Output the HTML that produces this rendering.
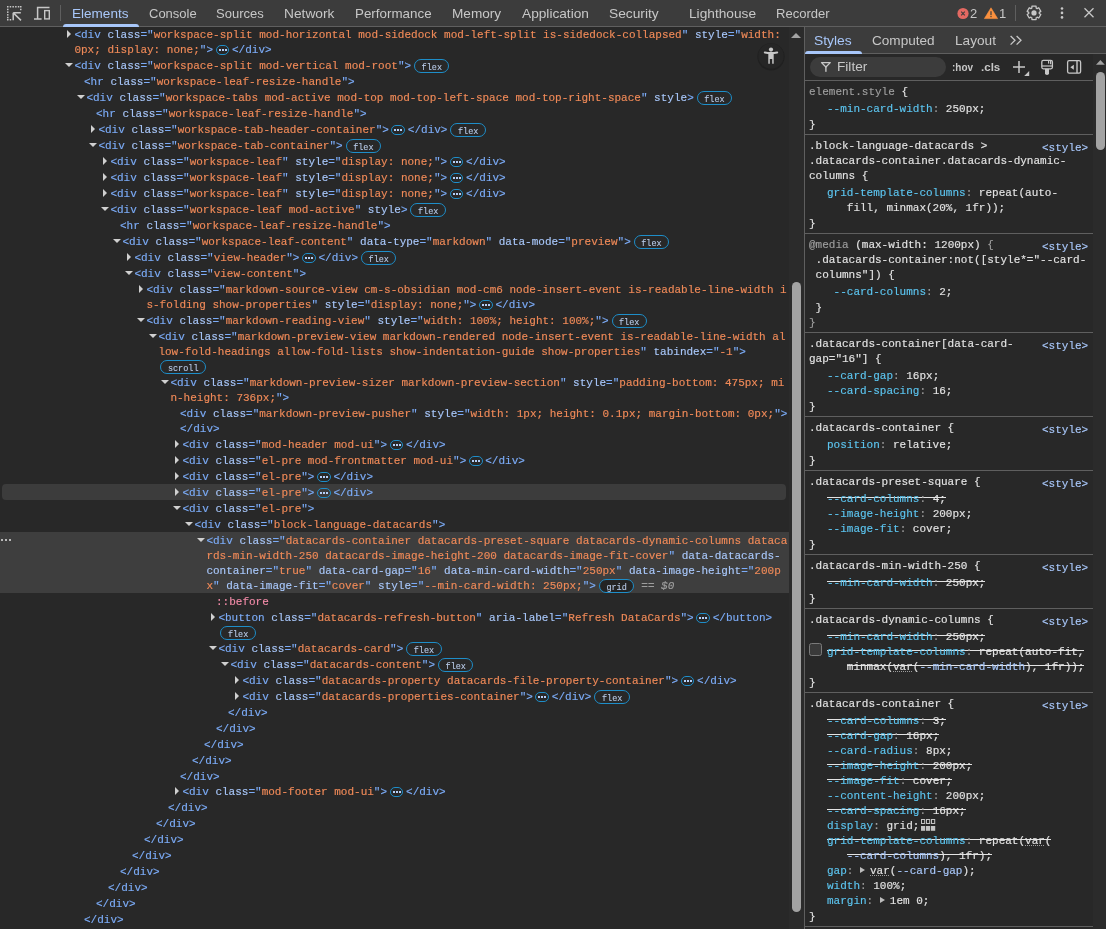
<!DOCTYPE html><html><head><meta charset="utf-8"><style>
*{box-sizing:border-box}
html,body{margin:0;padding:0;width:1106px;height:929px;overflow:hidden;background:#282828}
body{position:relative;font-family:'Liberation Sans', sans-serif}
.wrap{position:absolute;left:0;top:0;width:1106px;height:929px;will-change:transform}
.tb{position:absolute;left:0;top:0;width:1106px;height:26px;background:#3c3c3c}
.tbb{position:absolute;left:0;top:26px;width:1106px;height:1px;background:#5f5f5f}
.tab{position:absolute;top:6px;font:13px 'Liberation Sans', sans-serif;color:#c7c7c7;white-space:pre;line-height:15px}
.tab.on{color:#a8c7fa}
.ul{position:absolute;background:#a8c7fa;border-radius:3px 3px 0 0}
.ln{position:absolute;font:11px 'Liberation Mono', monospace;line-height:15px;height:15px;white-space:pre;-webkit-text-stroke:0.15px currentColor}
.t{color:#7cacf8} .a{color:#a8c7fa} .v{color:#f08a58} .p{color:#f28ba8}
.ell{display:inline-block;position:relative;top:2.6px;vertical-align:top;width:13.8px;height:10px;margin:0 2.6px 0 2.6px;border:1px solid #1e8ec9;border-radius:5px;text-align:center;line-height:6px}
.ell i{display:inline-block;width:2px;height:2px;background:#b4cff8;margin:0 .5px;vertical-align:top;margin-top:3px}
.bdg{display:inline-block;position:relative;top:.3px;vertical-align:top;height:14px;padding:0 6.5px;margin-left:3px;border:1px solid #1e8ec9;border-radius:7px;font:8.5px 'Liberation Mono', monospace;line-height:16px;color:#b9cbe8;-webkit-text-stroke:0.1px currentColor}
.bdg.g{background:#242424}
.dl{color:#9e9e9e;font-style:italic;margin-left:7px}
.trid{position:absolute;width:0;height:0;border-left:4px solid transparent;border-right:4px solid transparent;border-top:4.2px solid #d0d0d0}
.trir{position:absolute;width:0;height:0;border-top:4px solid transparent;border-bottom:4px solid transparent;border-left:4.6px solid #d0d0d0}
.hov{position:absolute;left:2px;width:784px;background:#3c3c3c;border-radius:4px}
.selr{position:absolute;left:0;width:789px;background:#3e3e3e}
.seldots{position:absolute;left:1px;height:3px;line-height:0}
.seldots i{display:inline-block;width:2px;height:2px;border-radius:1px;background:#e3e3e3;margin-right:1.75px}
.lsb{position:absolute;left:789px;top:27px;width:15px;height:902px;background:#2b2b2b}
.lth{position:absolute;left:792px;top:282px;width:9px;height:630px;border-radius:4.5px;background:#a3a3a3}
.vdiv{position:absolute;left:804px;top:27px;width:1px;height:902px;background:#5f5f5f}
.sh{position:absolute;left:805px;top:27px;width:301px;height:26px;background:#3c3c3c}
.shb{position:absolute;left:805px;top:53px;width:301px;height:1px;background:#5f5f5f}
.ftb{position:absolute;left:805px;top:80px;width:288px;height:1px;background:#5f5f5f}
.rsb{position:absolute;left:1093px;top:54px;width:13px;height:875px;background:#2b2b2b}
.rth{position:absolute;left:1096px;top:72px;width:9px;height:78px;border-radius:4.5px;background:#a3a3a3}
.pill{position:absolute;left:810px;top:57px;width:136px;height:20px;border-radius:10px;background:#3c3c3c}
.sb{position:absolute;left:805px;width:288px;height:1px;background:#5f5f5f}
.eg{color:#9e9e9e} .sw{color:#e3e3e3} .pn{color:#5cc5f0} .pc{color:#9e9e9e} .pv{color:#e3e3e3} .lk{color:#a8c7fa} .vr{color:#a8c7fa}
.st{background:linear-gradient(#e3e3e3,#e3e3e3) 0 4.2px/100% 1px no-repeat}
.vu{text-decoration:underline dotted #9e9e9e}
.cbx{position:absolute;left:809px;width:13px;height:13px;border:1px solid #7a7a7a;border-radius:2.5px;background:#3a3a3a}
.exp{display:inline-block;width:10px;height:15px;position:relative;vertical-align:top}
.exp:after{content:"";position:absolute;left:0px;top:3.5px;border-top:3.7px solid transparent;border-bottom:3.7px solid transparent;border-left:5.6px solid #bdbdbd}
.hc{position:absolute;font:bold 10.5px 'Liberation Sans', sans-serif;color:#c7c7c7;line-height:15px;white-space:pre}
.gicon{display:inline-block;width:14px;height:15px;position:relative;vertical-align:top}
</style></head><body>
<div class="wrap">
<div class="tb"></div><div class="tbb"></div>
<div class="tab on" style="left:72.16px;top:6px;transform:scaleX(1.0415);transform-origin:0 0">Elements</div>
<div class="tab" style="left:149.0px;top:6px;transform:scaleX(1.0);transform-origin:0 0">Console</div>
<div class="tab" style="left:216.0px;top:6px;transform:scaleX(1.0);transform-origin:0 0">Sources</div>
<div class="tab" style="left:283.94px;top:6px;transform:scaleX(1.0574);transform-origin:0 0">Network</div>
<div class="tab" style="left:355.47px;top:6px;transform:scaleX(1.0288);transform-origin:0 0">Performance</div>
<div class="tab" style="left:452.15px;top:6px;transform:scaleX(1.0457);transform-origin:0 0">Memory</div>
<div class="tab" style="left:522.3px;top:6px;transform:scaleX(1.0524);transform-origin:0 0">Application</div>
<div class="tab" style="left:608.94px;top:6px;transform:scaleX(1.0587);transform-origin:0 0">Security</div>
<div class="tab" style="left:689.35px;top:6px;transform:scaleX(1.0532);transform-origin:0 0">Lighthouse</div>
<div class="tab" style="left:776.2px;top:6px;transform:scaleX(1.0038);transform-origin:0 0">Recorder</div>
<div class="ul" style="left:63px;top:24px;width:76px;height:3px"></div>
<div class="lsb"></div><div class="lth"></div>
<div class="trir" style="left:66.6px;top:30.2px"></div>
<div class="ln" style="left:74.4px;top:27.6px"><span class="t">&lt;div </span><span class="a">class</span><span class="t">="</span><span class="v">workspace-split mod-horizontal mod-sidedock mod-left-split is-sidedock-collapsed</span><span class="t">" </span><span class="a">style</span><span class="t">="</span><span class="v">width:</span></div>
<div class="ln" style="left:74.4px;top:42.6px"><span class="v">0px; display: none;</span><span class="t">"&gt;</span><span class="ell"><i></i><i></i><i></i></span><span class="t">&lt;/div&gt;</span></div>
<div class="trid" style="left:65px;top:62.9px"></div>
<div class="ln" style="left:74.4px;top:58.6px"><span class="t">&lt;div </span><span class="a">class</span><span class="t">="</span><span class="v">workspace-split mod-vertical mod-root</span><span class="t">"&gt;</span><span class="bdg">flex</span></div>
<div class="ln" style="left:84.0px;top:74.6px"><span class="t">&lt;hr </span><span class="a">class</span><span class="t">="</span><span class="v">workspace-leaf-resize-handle</span><span class="t">"&gt;</span></div>
<div class="trid" style="left:77px;top:94.9px"></div>
<div class="ln" style="left:86.4px;top:90.6px"><span class="t">&lt;div </span><span class="a">class</span><span class="t">="</span><span class="v">workspace-tabs mod-active mod-top mod-top-left-space mod-top-right-space</span><span class="t">" </span><span class="a">style</span><span class="t">&gt;</span><span class="bdg">flex</span></div>
<div class="ln" style="left:96.0px;top:106.6px"><span class="t">&lt;hr </span><span class="a">class</span><span class="t">="</span><span class="v">workspace-leaf-resize-handle</span><span class="t">"&gt;</span></div>
<div class="trir" style="left:90.6px;top:125.2px"></div>
<div class="ln" style="left:98.4px;top:122.6px"><span class="t">&lt;div </span><span class="a">class</span><span class="t">="</span><span class="v">workspace-tab-header-container</span><span class="t">"&gt;</span><span class="ell"><i></i><i></i><i></i></span><span class="t">&lt;/div&gt;</span><span class="bdg">flex</span></div>
<div class="trid" style="left:89px;top:142.9px"></div>
<div class="ln" style="left:98.4px;top:138.6px"><span class="t">&lt;div </span><span class="a">class</span><span class="t">="</span><span class="v">workspace-tab-container</span><span class="t">"&gt;</span><span class="bdg">flex</span></div>
<div class="trir" style="left:102.6px;top:157.2px"></div>
<div class="ln" style="left:110.4px;top:154.6px"><span class="t">&lt;div </span><span class="a">class</span><span class="t">="</span><span class="v">workspace-leaf</span><span class="t">" </span><span class="a">style</span><span class="t">="</span><span class="v">display: none;</span><span class="t">"&gt;</span><span class="ell"><i></i><i></i><i></i></span><span class="t">&lt;/div&gt;</span></div>
<div class="trir" style="left:102.6px;top:173.2px"></div>
<div class="ln" style="left:110.4px;top:170.6px"><span class="t">&lt;div </span><span class="a">class</span><span class="t">="</span><span class="v">workspace-leaf</span><span class="t">" </span><span class="a">style</span><span class="t">="</span><span class="v">display: none;</span><span class="t">"&gt;</span><span class="ell"><i></i><i></i><i></i></span><span class="t">&lt;/div&gt;</span></div>
<div class="trir" style="left:102.6px;top:189.2px"></div>
<div class="ln" style="left:110.4px;top:186.6px"><span class="t">&lt;div </span><span class="a">class</span><span class="t">="</span><span class="v">workspace-leaf</span><span class="t">" </span><span class="a">style</span><span class="t">="</span><span class="v">display: none;</span><span class="t">"&gt;</span><span class="ell"><i></i><i></i><i></i></span><span class="t">&lt;/div&gt;</span></div>
<div class="trid" style="left:101px;top:206.9px"></div>
<div class="ln" style="left:110.4px;top:202.6px"><span class="t">&lt;div </span><span class="a">class</span><span class="t">="</span><span class="v">workspace-leaf mod-active</span><span class="t">" </span><span class="a">style</span><span class="t">&gt;</span><span class="bdg">flex</span></div>
<div class="ln" style="left:120.0px;top:218.6px"><span class="t">&lt;hr </span><span class="a">class</span><span class="t">="</span><span class="v">workspace-leaf-resize-handle</span><span class="t">"&gt;</span></div>
<div class="trid" style="left:113px;top:238.9px"></div>
<div class="ln" style="left:122.4px;top:234.6px"><span class="t">&lt;div </span><span class="a">class</span><span class="t">="</span><span class="v">workspace-leaf-content</span><span class="t">" </span><span class="a">data-type</span><span class="t">="</span><span class="v">markdown</span><span class="t">" </span><span class="a">data-mode</span><span class="t">="</span><span class="v">preview</span><span class="t">"&gt;</span><span class="bdg">flex</span></div>
<div class="trir" style="left:126.6px;top:253.2px"></div>
<div class="ln" style="left:134.4px;top:250.6px"><span class="t">&lt;div </span><span class="a">class</span><span class="t">="</span><span class="v">view-header</span><span class="t">"&gt;</span><span class="ell"><i></i><i></i><i></i></span><span class="t">&lt;/div&gt;</span><span class="bdg">flex</span></div>
<div class="trid" style="left:125px;top:270.9px"></div>
<div class="ln" style="left:134.4px;top:266.6px"><span class="t">&lt;div </span><span class="a">class</span><span class="t">="</span><span class="v">view-content</span><span class="t">"&gt;</span></div>
<div class="trir" style="left:138.6px;top:285.2px"></div>
<div class="ln" style="left:146.4px;top:282.6px"><span class="t">&lt;div </span><span class="a">class</span><span class="t">="</span><span class="v">markdown-source-view cm-s-obsidian mod-cm6 node-insert-event is-readable-line-width i</span></div>
<div class="ln" style="left:146.4px;top:297.6px"><span class="v">s-folding show-properties</span><span class="t">" </span><span class="a">style</span><span class="t">="</span><span class="v">display: none;</span><span class="t">"&gt;</span><span class="ell"><i></i><i></i><i></i></span><span class="t">&lt;/div&gt;</span></div>
<div class="trid" style="left:137px;top:317.9px"></div>
<div class="ln" style="left:146.4px;top:313.6px"><span class="t">&lt;div </span><span class="a">class</span><span class="t">="</span><span class="v">markdown-reading-view</span><span class="t">" </span><span class="a">style</span><span class="t">="</span><span class="v">width: 100%; height: 100%;</span><span class="t">"&gt;</span><span class="bdg">flex</span></div>
<div class="trid" style="left:149px;top:333.9px"></div>
<div class="ln" style="left:158.4px;top:329.6px"><span class="t">&lt;div </span><span class="a">class</span><span class="t">="</span><span class="v">markdown-preview-view markdown-rendered node-insert-event is-readable-line-width al</span></div>
<div class="ln" style="left:158.4px;top:344.6px"><span class="v">low-fold-headings allow-fold-lists show-indentation-guide show-properties</span><span class="t">" </span><span class="a">tabindex</span><span class="t">="</span><span class="v">-1</span><span class="t">"&gt;</span></div>
<div class="ln" style="left:158.4px;top:359.6px"><span class="bdg" style="margin-left:2px">scroll</span></div>
<div class="trid" style="left:161px;top:379.9px"></div>
<div class="ln" style="left:170.4px;top:375.6px"><span class="t">&lt;div </span><span class="a">class</span><span class="t">="</span><span class="v">markdown-preview-sizer markdown-preview-section</span><span class="t">" </span><span class="a">style</span><span class="t">="</span><span class="v">padding-bottom: 475px; mi</span></div>
<div class="ln" style="left:170.4px;top:390.6px"><span class="v">n-height: 736px;</span><span class="t">"&gt;</span></div>
<div class="ln" style="left:180.0px;top:406.6px"><span class="t">&lt;div </span><span class="a">class</span><span class="t">="</span><span class="v">markdown-preview-pusher</span><span class="t">" </span><span class="a">style</span><span class="t">="</span><span class="v">width: 1px; height: 0.1px; margin-bottom: 0px;</span><span class="t">"&gt;</span></div>
<div class="ln" style="left:180.0px;top:421.6px"><span class="t">&lt;/div&gt;</span></div>
<div class="trir" style="left:174.6px;top:440.2px"></div>
<div class="ln" style="left:182.4px;top:437.6px"><span class="t">&lt;div </span><span class="a">class</span><span class="t">="</span><span class="v">mod-header mod-ui</span><span class="t">"&gt;</span><span class="ell"><i></i><i></i><i></i></span><span class="t">&lt;/div&gt;</span></div>
<div class="trir" style="left:174.6px;top:456.2px"></div>
<div class="ln" style="left:182.4px;top:453.6px"><span class="t">&lt;div </span><span class="a">class</span><span class="t">="</span><span class="v">el-pre mod-frontmatter mod-ui</span><span class="t">"&gt;</span><span class="ell"><i></i><i></i><i></i></span><span class="t">&lt;/div&gt;</span></div>
<div class="trir" style="left:174.6px;top:472.2px"></div>
<div class="ln" style="left:182.4px;top:469.6px"><span class="t">&lt;div </span><span class="a">class</span><span class="t">="</span><span class="v">el-pre</span><span class="t">"&gt;</span><span class="ell"><i></i><i></i><i></i></span><span class="t">&lt;/div&gt;</span></div>
<div class="hov" style="top:484.0px;height:16px"></div>
<div class="trir" style="left:174.6px;top:488.2px"></div>
<div class="ln" style="left:182.4px;top:485.6px"><span class="t">&lt;div </span><span class="a">class</span><span class="t">="</span><span class="v">el-pre</span><span class="t">"&gt;</span><span class="ell"><i></i><i></i><i></i></span><span class="t">&lt;/div&gt;</span></div>
<div class="trid" style="left:173px;top:505.9px"></div>
<div class="ln" style="left:182.4px;top:501.6px"><span class="t">&lt;div </span><span class="a">class</span><span class="t">="</span><span class="v">el-pre</span><span class="t">"&gt;</span></div>
<div class="trid" style="left:185px;top:521.9px"></div>
<div class="ln" style="left:194.4px;top:517.6px"><span class="t">&lt;div </span><span class="a">class</span><span class="t">="</span><span class="v">block-language-datacards</span><span class="t">"&gt;</span></div>
<div class="selr" style="top:531.7px;height:61px"></div><div class="seldots" style="top:535.6px"><i></i><i></i><i></i></div>
<div class="trid" style="left:197px;top:537.9px"></div>
<div class="ln" style="left:206.4px;top:533.6px"><span class="t">&lt;div </span><span class="a">class</span><span class="t">="</span><span class="v">datacards-container datacards-preset-square datacards-dynamic-columns dataca</span></div>
<div class="ln" style="left:206.4px;top:548.6px"><span class="v">rds-min-width-250 datacards-image-height-200 datacards-image-fit-cover</span><span class="t">" </span><span class="a">data-datacards-</span></div>
<div class="ln" style="left:206.4px;top:563.6px"><span class="a">container</span><span class="t">="</span><span class="v">true</span><span class="t">" </span><span class="a">data-card-gap</span><span class="t">="</span><span class="v">16</span><span class="t">" </span><span class="a">data-min-card-width</span><span class="t">="</span><span class="v">250px</span><span class="t">" </span><span class="a">data-image-height</span><span class="t">="</span><span class="v">200p</span></div>
<div class="ln" style="left:206.4px;top:578.6px"><span class="v">x</span><span class="t">" </span><span class="a">data-image-fit</span><span class="t">="</span><span class="v">cover</span><span class="t">" </span><span class="a">style</span><span class="t">="</span><span class="v">--min-card-width: 250px;</span><span class="t">"&gt;</span><span class="bdg g">grid</span><span class="dl">== $0</span></div>
<div class="ln" style="left:216.0px;top:594.6px"><span class="p">::before</span></div>
<div class="trir" style="left:210.6px;top:613.2px"></div>
<div class="ln" style="left:218.4px;top:610.6px"><span class="t">&lt;button </span><span class="a">class</span><span class="t">="</span><span class="v">datacards-refresh-button</span><span class="t">" </span><span class="a">aria-label</span><span class="t">="</span><span class="v">Refresh DataCards</span><span class="t">"&gt;</span><span class="ell"><i></i><i></i><i></i></span><span class="t">&lt;/button&gt;</span></div>
<div class="ln" style="left:218.4px;top:625.6px"><span class="bdg" style="margin-left:2px">flex</span></div>
<div class="trid" style="left:209px;top:645.9px"></div>
<div class="ln" style="left:218.4px;top:641.6px"><span class="t">&lt;div </span><span class="a">class</span><span class="t">="</span><span class="v">datacards-card</span><span class="t">"&gt;</span><span class="bdg">flex</span></div>
<div class="trid" style="left:221px;top:661.9px"></div>
<div class="ln" style="left:230.4px;top:657.6px"><span class="t">&lt;div </span><span class="a">class</span><span class="t">="</span><span class="v">datacards-content</span><span class="t">"&gt;</span><span class="bdg">flex</span></div>
<div class="trir" style="left:234.6px;top:676.2px"></div>
<div class="ln" style="left:242.4px;top:673.6px"><span class="t">&lt;div </span><span class="a">class</span><span class="t">="</span><span class="v">datacards-property datacards-file-property-container</span><span class="t">"&gt;</span><span class="ell"><i></i><i></i><i></i></span><span class="t">&lt;/div&gt;</span></div>
<div class="trir" style="left:234.6px;top:692.2px"></div>
<div class="ln" style="left:242.4px;top:689.6px"><span class="t">&lt;div </span><span class="a">class</span><span class="t">="</span><span class="v">datacards-properties-container</span><span class="t">"&gt;</span><span class="ell"><i></i><i></i><i></i></span><span class="t">&lt;/div&gt;</span><span class="bdg">flex</span></div>
<div class="ln" style="left:228.0px;top:705.6px"><span class="t">&lt;/div&gt;</span></div>
<div class="ln" style="left:216.0px;top:721.6px"><span class="t">&lt;/div&gt;</span></div>
<div class="ln" style="left:204.0px;top:737.6px"><span class="t">&lt;/div&gt;</span></div>
<div class="ln" style="left:192.0px;top:753.6px"><span class="t">&lt;/div&gt;</span></div>
<div class="ln" style="left:180.0px;top:769.6px"><span class="t">&lt;/div&gt;</span></div>
<div class="trir" style="left:174.6px;top:787.2px"></div>
<div class="ln" style="left:182.4px;top:784.6px"><span class="t">&lt;div </span><span class="a">class</span><span class="t">="</span><span class="v">mod-footer mod-ui</span><span class="t">"&gt;</span><span class="ell"><i></i><i></i><i></i></span><span class="t">&lt;/div&gt;</span></div>
<div class="ln" style="left:168.0px;top:800.6px"><span class="t">&lt;/div&gt;</span></div>
<div class="ln" style="left:156.0px;top:816.6px"><span class="t">&lt;/div&gt;</span></div>
<div class="ln" style="left:144.0px;top:832.6px"><span class="t">&lt;/div&gt;</span></div>
<div class="ln" style="left:132.0px;top:848.6px"><span class="t">&lt;/div&gt;</span></div>
<div class="ln" style="left:120.0px;top:864.6px"><span class="t">&lt;/div&gt;</span></div>
<div class="ln" style="left:108.0px;top:880.6px"><span class="t">&lt;/div&gt;</span></div>
<div class="ln" style="left:96.0px;top:896.6px"><span class="t">&lt;/div&gt;</span></div>
<div class="ln" style="left:84.0px;top:912.6px"><span class="t">&lt;/div&gt;</span></div>
<div class="vdiv"></div>
<div class="sh"></div><div class="shb"></div>
<div class="tab on" style="left:814.14px;top:33px;transform:scaleX(1.0647);transform-origin:0 0">Styles</div>
<div class="tab" style="left:872.2px;top:33px;transform:scaleX(1.0441);transform-origin:0 0">Computed</div>
<div class="tab" style="left:954.75px;top:33px;transform:scaleX(1.05);transform-origin:0 0">Layout</div>
<div class="ul" style="left:805px;top:51px;width:57px;height:3px"></div>
<div class="pill"></div><div class="ftb"></div><div class="rsb"></div><div class="rth"></div>
<div class="tab" style="left:837.35px;top:59px;transform:scaleX(1.05);transform-origin:0 0">Filter</div>
<div class="tab cnt" style="left:970px;top:6px">2</div><div class="tab cnt" style="left:999px;top:6px">1</div>
<div class="hc" style="left:951.5px;top:60px;transform:scaleX(0.95);transform-origin:0 0">:hov</div><div class="hc" style="left:981px;top:60px;transform:scaleX(1.1);transform-origin:0 0">.cls</div>
<div class="ln" style="left:809.0px;top:84.5px"><span class="eg">element.style</span><span class="sw"> {</span></div>
<div class="ln" style="left:827.0px;top:101.5px"><span class="pn">--min-card-width</span><span class="pc">: </span><span class="pv">250px</span><span class="pv">;</span></div>
<div class="ln" style="left:809.0px;top:117.5px"><span class="sw">}</span></div>
<div class="sb" style="top:134px"></div>
<div class="ln" style="left:809.0px;top:138.5px"><span class="sw">.block-language-datacards &gt;</span></div>
<div class="ln" style="left:1042.0px;top:140.5px"><span class="lk">&lt;style&gt;</span></div>
<div class="ln" style="left:809.0px;top:153.5px"><span class="sw">.datacards-container.datacards-dynamic-</span></div>
<div class="ln" style="left:809.0px;top:168.5px"><span class="sw">columns {</span></div>
<div class="ln" style="left:827.0px;top:185.5px"><span class="pn">grid-template-columns</span><span class="pc">: </span><span class="pv">repeat(auto-</span></div>
<div class="ln" style="left:846.8px;top:200.5px"><span class="pv">fill, minmax(20%, 1fr));</span></div>
<div class="ln" style="left:809.0px;top:216.5px"><span class="sw">}</span></div>
<div class="sb" style="top:233px"></div>
<div class="ln" style="left:809.0px;top:237.5px"><span class="eg">@media</span><span class="sw"> (max-width: 1200px)</span><span class="eg"> {</span></div>
<div class="ln" style="left:1042.0px;top:239.5px"><span class="lk">&lt;style&gt;</span></div>
<div class="ln" style="left:809.0px;top:252.5px"><span class="sw"> .datacards-container:not([style*="--card-</span></div>
<div class="ln" style="left:809.0px;top:267.5px"><span class="sw"> columns"]) {</span></div>
<div class="ln" style="left:833.6px;top:284.5px"><span class="pn">--card-columns</span><span class="pc">: </span><span class="pv">2</span><span class="pv">;</span></div>
<div class="ln" style="left:809.0px;top:300.5px"><span class="sw"> }</span></div>
<div class="ln" style="left:809.0px;top:315.5px"><span class="eg">}</span></div>
<div class="sb" style="top:332px"></div>
<div class="ln" style="left:809.0px;top:336.5px"><span class="sw">.datacards-container[data-card-</span></div>
<div class="ln" style="left:1042.0px;top:338.5px"><span class="lk">&lt;style&gt;</span></div>
<div class="ln" style="left:809.0px;top:351.5px"><span class="sw">gap="16"] {</span></div>
<div class="ln" style="left:827.0px;top:368.5px"><span class="pn">--card-gap</span><span class="pc">: </span><span class="pv">16px</span><span class="pv">;</span></div>
<div class="ln" style="left:827.0px;top:383.5px"><span class="pn">--card-spacing</span><span class="pc">: </span><span class="pv">16</span><span class="pv">;</span></div>
<div class="ln" style="left:809.0px;top:399.5px"><span class="sw">}</span></div>
<div class="sb" style="top:416px"></div>
<div class="ln" style="left:809.0px;top:420.5px"><span class="sw">.datacards-container {</span></div>
<div class="ln" style="left:1042.0px;top:422.5px"><span class="lk">&lt;style&gt;</span></div>
<div class="ln" style="left:827.0px;top:437.5px"><span class="pn">position</span><span class="pc">: </span><span class="pv">relative</span><span class="pv">;</span></div>
<div class="ln" style="left:809.0px;top:453.5px"><span class="sw">}</span></div>
<div class="sb" style="top:470px"></div>
<div class="ln" style="left:809.0px;top:474.5px"><span class="sw">.datacards-preset-square {</span></div>
<div class="ln" style="left:1042.0px;top:476.5px"><span class="lk">&lt;style&gt;</span></div>
<div class="ln" style="left:827.0px;top:491.5px"><span class="st"><span class="pn">--card-columns</span><span class="pc">: </span><span class="pv">4</span><span class="pv">;</span></span></div>
<div class="ln" style="left:827.0px;top:506.5px"><span class="pn">--image-height</span><span class="pc">: </span><span class="pv">200px</span><span class="pv">;</span></div>
<div class="ln" style="left:827.0px;top:521.5px"><span class="pn">--image-fit</span><span class="pc">: </span><span class="pv">cover</span><span class="pv">;</span></div>
<div class="ln" style="left:809.0px;top:537.5px"><span class="sw">}</span></div>
<div class="sb" style="top:554px"></div>
<div class="ln" style="left:809.0px;top:558.5px"><span class="sw">.datacards-min-width-250 {</span></div>
<div class="ln" style="left:1042.0px;top:560.5px"><span class="lk">&lt;style&gt;</span></div>
<div class="ln" style="left:827.0px;top:575.5px"><span class="st"><span class="pn">--min-card-width</span><span class="pc">: </span><span class="pv">250px</span><span class="pv">;</span></span></div>
<div class="ln" style="left:809.0px;top:591.5px"><span class="sw">}</span></div>
<div class="sb" style="top:608px"></div>
<div class="ln" style="left:809.0px;top:612.5px"><span class="sw">.datacards-dynamic-columns {</span></div>
<div class="ln" style="left:1042.0px;top:614.5px"><span class="lk">&lt;style&gt;</span></div>
<div class="ln" style="left:827.0px;top:629.5px"><span class="st"><span class="pn">--min-card-width</span><span class="pc">: </span><span class="pv">250px</span><span class="pv">;</span></span></div>
<div class="ln" style="left:827.0px;top:644.5px"><span class="st"><span class="pn">grid-template-columns</span><span class="pc">: </span><span class="pv">repeat(auto-fit,</span></span></div>
<div class="cbx" style="top:643.0px"></div>
<div class="ln" style="left:846.8px;top:659.5px"><span class="st"><span class="pv">minmax(</span><span class="pv vu">var</span><span class="pv">(</span><span class="vr">--min-card-width</span><span class="pv">), 1fr));</span></span></div>
<div class="ln" style="left:809.0px;top:675.5px"><span class="sw">}</span></div>
<div class="sb" style="top:692px"></div>
<div class="ln" style="left:809.0px;top:696.5px"><span class="sw">.datacards-container {</span></div>
<div class="ln" style="left:1042.0px;top:698.5px"><span class="lk">&lt;style&gt;</span></div>
<div class="ln" style="left:827.0px;top:713.5px"><span class="st"><span class="pn">--card-columns</span><span class="pc">: </span><span class="pv">3</span><span class="pv">;</span></span></div>
<div class="ln" style="left:827.0px;top:728.5px"><span class="st"><span class="pn">--card-gap</span><span class="pc">: </span><span class="pv">16px</span><span class="pv">;</span></span></div>
<div class="ln" style="left:827.0px;top:743.5px"><span class="pn">--card-radius</span><span class="pc">: </span><span class="pv">8px</span><span class="pv">;</span></div>
<div class="ln" style="left:827.0px;top:758.5px"><span class="st"><span class="pn">--image-height</span><span class="pc">: </span><span class="pv">200px</span><span class="pv">;</span></span></div>
<div class="ln" style="left:827.0px;top:773.5px"><span class="st"><span class="pn">--image-fit</span><span class="pc">: </span><span class="pv">cover</span><span class="pv">;</span></span></div>
<div class="ln" style="left:827.0px;top:788.5px"><span class="pn">--content-height</span><span class="pc">: </span><span class="pv">200px</span><span class="pv">;</span></div>
<div class="ln" style="left:827.0px;top:803.5px"><span class="st"><span class="pn">--card-spacing</span><span class="pc">: </span><span class="pv">16px</span><span class="pv">;</span></span></div>
<div class="ln" style="left:827.0px;top:818.5px"><span class="pn">display</span><span class="pc">: </span><span class="pv">grid</span><span class="pv">;</span><span class="gicon"></span></div>
<div class="ln" style="left:827.0px;top:833.5px"><span class="st"><span class="pn">grid-template-columns</span><span class="pc">: </span><span class="pv">repeat(</span><span class="pv vu">var</span><span class="pv">(</span></span></div>
<div class="ln" style="left:846.8px;top:848.5px"><span class="st"><span class="vr">--card-columns</span><span class="pv">), 1fr);</span></span></div>
<div class="ln" style="left:827.0px;top:863.5px"><span class="pn">gap</span><span class="pc">: </span><span class="exp"></span><span class="pv vu">var</span><span class="pv">(</span><span class="vr">--card-gap</span><span class="pv">);</span></div>
<div class="ln" style="left:827.0px;top:878.5px"><span class="pn">width</span><span class="pc">: </span><span class="pv">100%</span><span class="pv">;</span></div>
<div class="ln" style="left:827.0px;top:893.5px"><span class="pn">margin</span><span class="pc">: </span><span class="exp"></span><span class="pv">1em 0</span><span class="pv">;</span></div>
<div class="ln" style="left:809.0px;top:909.5px"><span class="sw">}</span></div>
<div class="sb" style="top:926px"></div>

<svg style="position:absolute;left:0;top:0" width="1106" height="929">
 <g fill="#c7c7c7">
  <rect x="7" y="6" width="1.5" height="1.5"/><rect x="9.7" y="6" width="1.5" height="1.5"/><rect x="12.4" y="6" width="1.5" height="1.5"/><rect x="15.1" y="6" width="1.5" height="1.5"/><rect x="17.8" y="6" width="1.5" height="1.5"/><rect x="20" y="6" width="1.5" height="1.5"/>
  <rect x="7" y="8.7" width="1.5" height="1.5"/><rect x="7" y="11.4" width="1.5" height="1.5"/><rect x="7" y="14.1" width="1.5" height="1.5"/><rect x="7" y="16.8" width="1.5" height="1.5"/><rect x="7" y="19" width="1.5" height="1.5"/>
  <rect x="9.7" y="19" width="1.5" height="1.5"/><rect x="20" y="8.7" width="1.5" height="1.5"/>
 </g>
 <path d="M13.2 12.8 H20.8 M13.2 12.8 V20.2 M13.8 13.4 L21 20.4" stroke="#c7c7c7" stroke-width="1.5" fill="none"/>
 <path d="M49.5 7.6 H37.6 V18.6 M34 18.9 H41.6" stroke="#c7c7c7" stroke-width="1.5" fill="none"/>
 <rect x="44.7" y="10.6" width="4.6" height="8.3" stroke="#c7c7c7" stroke-width="1.4" fill="none"/>
 <rect x="60" y="5" width="1" height="16" fill="#5f5f5f"/>
 <circle cx="963" cy="13.5" r="5.6" fill="#e46962"/>
 <path d="M961.2 11.7 L964.8 15.3 M964.8 11.7 L961.2 15.3" stroke="#3c3c3c" stroke-width="1.1"/>
 <path d="M991 7.8 L997.6 18.6 H984.4 Z" fill="#fa903e" stroke="#fa903e" stroke-width="0.6" stroke-linejoin="round"/>
 <rect x="990.4" y="11.2" width="1.2" height="4" fill="#3c3c3c"/><rect x="990.4" y="16" width="1.2" height="1.2" fill="#3c3c3c"/>
 <rect x="1015" y="5" width="1" height="16" fill="#5f5f5f"/>
 <path d="M1031.35,8.31 L1031.84,8.06 L1031.93,6.21 L1036.07,6.21 L1036.16,8.06 L1036.65,8.31 L1037.11,8.61 L1038.76,7.76 L1040.83,11.35 L1039.27,12.35 L1039.30,12.90 L1039.27,13.45 L1040.83,14.45 L1038.76,18.04 L1037.11,17.19 L1036.65,17.49 L1036.16,17.74 L1036.07,19.59 L1031.93,19.59 L1031.84,17.74 L1031.35,17.49 L1030.89,17.19 L1029.24,18.04 L1027.17,14.45 L1028.73,13.45 L1028.70,12.90 L1028.73,12.35 L1027.17,11.35 L1029.24,7.76 L1030.89,8.61 Z" stroke="#c7c7c7" stroke-width="1.3" fill="none" stroke-linejoin="round"/>
 <circle cx="1034" cy="12.9" r="2.6" fill="#c7c7c7"/>
 <circle cx="1062" cy="8.5" r="1.3" fill="#c7c7c7"/><circle cx="1062" cy="12.9" r="1.3" fill="#c7c7c7"/><circle cx="1062" cy="17.4" r="1.3" fill="#c7c7c7"/>
 <path d="M1084.5 8.3 L1093.5 17.3 M1093.5 8.3 L1084.5 17.3" stroke="#c7c7c7" stroke-width="1.3"/>
 <!-- left scrollbar up arrow -->
 <path d="M796 33 L801 38 H791 Z" fill="#a3a3a3"/>
 <path d="M1100.4 60 L1104.8 64.8 H1096 Z" fill="#a3a3a3"/>
 <!-- accessibility button -->
 <circle cx="771" cy="56.8" r="13.6" fill="#1a1a1a" opacity="0.55"/>
 <circle cx="771" cy="56" r="12.8" fill="#262626"/>
 <circle cx="771" cy="49.6" r="2.1" fill="#c7c7c7"/>
 <path d="M764.8 52.4 Q771 53.6 777.2 52.4" stroke="#c7c7c7" stroke-width="2" fill="none" stroke-linecap="round"/>
 <path d="M768.3 53.5 H773.7 V63.8 H772.2 V59 H769.8 V63.8 H768.3 Z" fill="#c7c7c7"/>
 <!-- >> -->
 <path d="M1010.6 36 L1015 40.3 L1010.6 44.6 M1016.6 36 L1021 40.3 L1016.6 44.6" stroke="#c7c7c7" stroke-width="1.3" fill="none"/>
 <!-- filter funnel -->
 <path d="M821.5 62.6 H830.3 L825.9 67 Z" stroke="#c7c7c7" stroke-width="1.3" fill="none" stroke-linejoin="round"/>
 <rect x="825.2" y="66.5" width="1.4" height="5.3" fill="#c7c7c7"/>
 <!-- plus -->
 <path d="M1019 61 V73 M1013 67 H1025" stroke="#c7c7c7" stroke-width="1.5"/>
 <path d="M1029.2 71 V76 H1024.2 Z" fill="#c7c7c7"/>
 <!-- brush -->
 <rect x="1041.8" y="60.4" width="10.6" height="8.4" rx="1.5" stroke="#c7c7c7" stroke-width="1.3" fill="none"/>
 <path d="M1042 66 H1052.2" stroke="#c7c7c7" stroke-width="1.2"/>
 <path d="M1045 68.8 H1049 V73.6 Q1049 75 1047 75 Q1045 75 1045 73.6 Z" fill="#c7c7c7"/>
 <rect x="1048" y="61" width="1.2" height="2.6" fill="#c7c7c7"/><rect x="1050" y="61" width="1.2" height="3.2" fill="#c7c7c7"/>
 <!-- sidebar toggle -->
 <rect x="1067.6" y="60.6" width="13" height="12.6" rx="1.6" stroke="#c7c7c7" stroke-width="1.3" fill="none"/>
 <rect x="1076.3" y="61" width="1.4" height="12" fill="#c7c7c7"/>
 <path d="M1070.3 67.3 L1073.8 64.8 V69.8 Z" fill="#c7c7c7"/>
 <!-- grid icon -->
 <g fill="none" stroke="#c4c4c4" stroke-width="1">
  <rect x="921.5" y="819.5" width="3.2" height="4"/><rect x="926.5" y="819.5" width="3.2" height="4"/><rect x="931.5" y="819.5" width="3.2" height="4"/>
 </g>
 <g fill="#c4c4c4">
  <rect x="921" y="826" width="4.2" height="4.8"/><rect x="926" y="826" width="4.2" height="4.8"/><rect x="931" y="826" width="4.2" height="4.8"/>
 </g>
</svg>

</div></body></html>
